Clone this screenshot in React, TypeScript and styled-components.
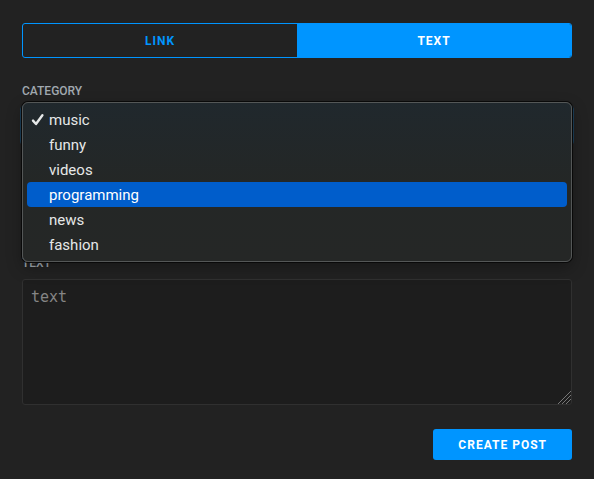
import React, { useState } from "react";
import styled, { createGlobalStyle } from "styled-components";

const GlobalStyle = createGlobalStyle`
  * { box-sizing: border-box; }
  body {
    margin: 0;
    background: #222222;
    color: #ffffff;
    font-family: Roboto, "Open Sans", sans-serif;
  }
  button, input, select, textarea { font: inherit; }
`;

const Form = styled.form`
  display: flex;
  flex-direction: column;
  padding: 23px 22px 19px;
`;

const Tabs = styled.div`
  display: flex;
  height: 35px;
  margin-bottom: 25px;
  border: 1px solid #0095ff;
  border-radius: 3px;
  overflow: hidden;
`;

const Tab = styled.button<{ $active: boolean }>`
  flex: 1;
  padding: 0;
  border: 0;
  background: ${(p) => (p.$active ? "#0095ff" : "transparent")};
  color: ${(p) => (p.$active ? "#ffffff" : "#0095ff")};
  font-size: 12px;
  font-weight: 700;
  letter-spacing: 1px;
  text-transform: uppercase;
  cursor: pointer;
`;

const Field = styled.div`
  position: relative;
  display: flex;
  flex-direction: column;
  margin-bottom: 24px;
`;

const Label = styled.label`
  margin-bottom: 8px;
  color: #a1a9b0;
  font-size: 12px;
  font-weight: 500;
  line-height: 16px;
  text-transform: uppercase;
`;

const Select = styled.select`
  height: 37px;
  padding: 8px;
  border: 1px solid #0d4772;
  border-radius: 3px;
  background: #1d1d1d;
  color: #e0e0e0;
  box-shadow: 0 0 0 2px #1b3f5a;
`;

const Input = styled.input`
  height: 39px;
  margin-bottom: 48px;
  padding: 8px;
  border: 1px solid #303030;
  border-radius: 3px;
  background: #1d1d1d;
  color: #e0e0e0;
`;

const Menu = styled.div`
  position: absolute;
  z-index: 1;
  top: 19px;
  left: 0;
  right: 0;
  display: flex;
  flex-direction: column;
  padding: 4px;
  border: 1px solid #545757;
  border-radius: 6px;
  background: linear-gradient(#20282d, #242726 50%, #252726);
  box-shadow: 0 0 0 1px #090909, 0 6px 16px rgba(0, 0, 0, 0.3);
`;

const Option = styled.button<{ $highlighted: boolean }>`
  display: grid;
  grid-template-columns: 22px 1fr;
  align-items: center;
  height: 25px;
  padding: 0;
  border: 0;
  border-radius: 4px;
  background: ${(p) => (p.$highlighted ? "#005dcb" : "transparent")};
  color: ${(p) => (p.$highlighted ? "#ffffff" : "#e6e8e8")};
  font-size: 15px;
  line-height: 20px;
  text-align: left;
`;

const Mark = styled.span`
  display: flex;
  padding-left: 4px;
`;

const TextBox = styled.div`
  position: relative;
  display: flex;
`;

const TextArea = styled.textarea`
  flex: 1;
  min-width: 0;
  height: 126px;
  padding: 8px;
  border: 1px solid #303030;
  border-radius: 3px;
  background: #1d1d1d;
  color: #e0e0e0;
  font-family: "DejaVu Sans Mono", monospace;
  font-size: 15px;
  line-height: 18px;
  resize: none;
  &::placeholder { color: #858585; opacity: 1; }
`;

const Grip = styled.svg`
  position: absolute;
  right: 1px;
  bottom: 1px;
  pointer-events: none;
`;

const Submit = styled.button`
  align-self: flex-end;
  height: 31px;
  padding: 0 25px;
  border: 0;
  border-radius: 3px;
  background: #0095ff;
  color: #ffffff;
  font-size: 12px;
  font-weight: 700;
  letter-spacing: 1px;
  text-transform: uppercase;
  cursor: pointer;
`;

const categories = ["music", "funny", "videos", "programming", "news", "fashion"];
const kinds = ["link", "text"];

export default function App() {
  const [kind, setKind] = useState("text");
  const [category, setCategory] = useState("music");
  const [hovered, setHovered] = useState("programming");

  return (
    <>
      <GlobalStyle />
      <Form onSubmit={(e) => e.preventDefault()}>
        <Tabs role="tablist">
          {kinds.map((k) => (
            <Tab
              key={k}
              type="button"
              role="tab"
              aria-selected={kind === k}
              $active={kind === k}
              onClick={() => setKind(k)}
            >
              {k}
            </Tab>
          ))}
        </Tabs>
        <Field>
          <Label htmlFor="category">category</Label>
          <Select id="category" value={category} onChange={(e) => setCategory(e.target.value)}>
            {categories.map((c) => (
              <option key={c}>{c}</option>
            ))}
          </Select>
          <Menu role="listbox" aria-label="category">
            {categories.map((c) => (
              <Option
                key={c}
                type="button"
                role="option"
                aria-selected={category === c}
                $highlighted={hovered === c}
                onMouseEnter={() => setHovered(c)}
                onClick={() => setCategory(c)}
              >
                <Mark>
                  {category === c && (
                    <svg width="14" height="14" viewBox="0 0 14 14" fill="none" aria-hidden="true">
                      <path
                        d="M2 7.6 5 11 11.4 2.2"
                        stroke="currentColor"
                        strokeWidth="2.4"
                        strokeLinecap="round"
                        strokeLinejoin="round"
                      />
                    </svg>
                  )}
                </Mark>
                {c}
              </Option>
            ))}
          </Menu>
        </Field>
        <Input aria-label="title" />
        <Field>
          <Label htmlFor="text">text</Label>
          <TextBox>
            <TextArea id="text" placeholder="text" />
            <Grip width="13" height="13" viewBox="0 0 13 13" aria-hidden="true">
              <path d="M0 13 13 0M4 13 13 4M8 13 13 8" stroke="#777777" strokeWidth="1" />
            </Grip>
          </TextBox>
        </Field>
        <Submit type="submit">create post</Submit>
      </Form>
    </>
  );
}
